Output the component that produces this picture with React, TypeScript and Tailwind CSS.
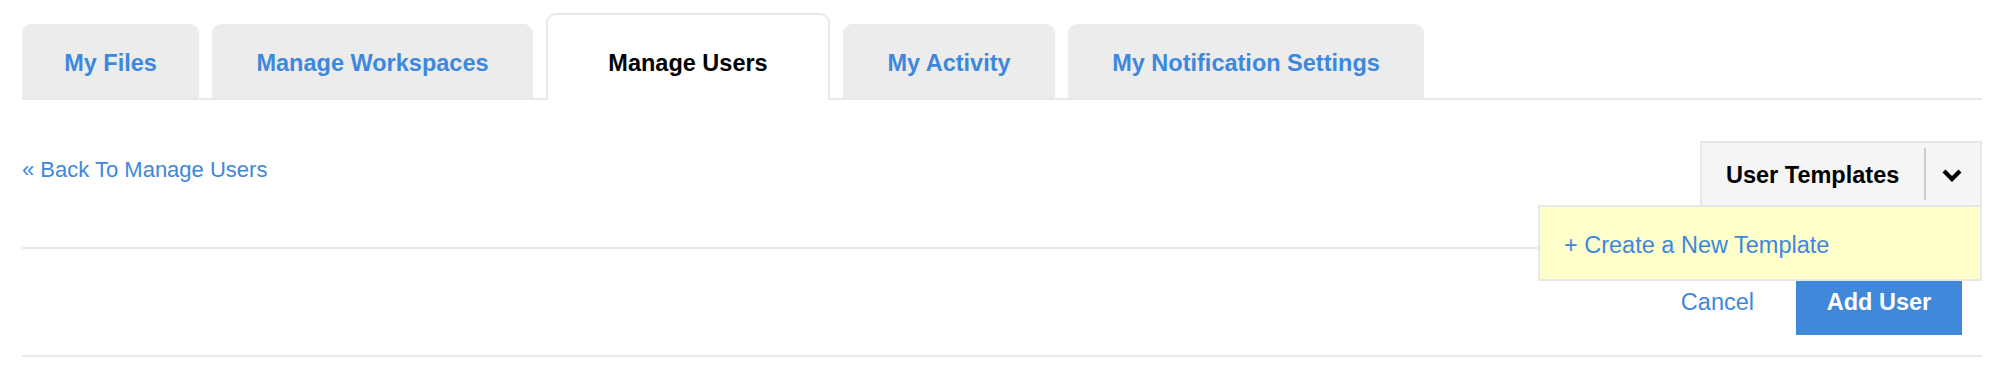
import React from "react";

const tabs = [
  { label: "My Files", w: "w-[177px]", active: false },
  { label: "Manage Workspaces", w: "w-[321px]", active: false },
  { label: "Manage Users", w: "w-[284px]", active: true },
  { label: "My Activity", w: "w-[212px]", active: false },
  { label: "My Notification Settings", w: "w-[356px]", active: false },
];

export default function App() {
  return (
    <div
      className="w-[2000px] h-[382px] bg-white pl-[22px] pr-[18px] text-[#3d88dc]"
      style={{ fontFamily: '"Liberation Sans", Arial, Helvetica, sans-serif' }}
    >
      {/* Tabs */}
      <div className="flex items-end gap-[13px] pt-[13px] border-b-2 border-[#e8e8e8]">
        {tabs.map((t) =>
          t.active ? (
            <div
              key={t.label}
              className={`${t.w} h-[87px] -mb-[2px] bg-white border-2 border-b-0 border-[#e8e8e8] rounded-t-[10px] flex justify-center pt-[37px] text-[23.5px] leading-none font-bold text-black`}
            >
              {t.label}
            </div>
          ) : (
            <div
              key={t.label}
              className={`${t.w} h-[74px] bg-[#ececec] rounded-t-[9px] flex justify-center pt-[28px] text-[23.5px] leading-none font-bold text-[#3d88dc]`}
            >
              {t.label}
            </div>
          )
        )}
      </div>

      {/* Header row */}
      <div className="flex justify-between items-start pt-[41px] pb-[40px] border-b-2 border-[#e8e8e8]">
        <a className="mt-[18px] text-[22px] leading-none text-[#3d88dc] cursor-pointer">
          « Back To Manage Users
        </a>
        <div className="relative">
          <div className="h-[66px] w-[282px] bg-[#f5f5f5] border-2 border-[#e8e8e8] flex items-center">
            <span className="pl-[24px] pr-[25px] pt-[3px] text-[23.5px] leading-none font-bold text-black whitespace-nowrap">
              User Templates
            </span>
            <span className="w-[2px] h-[52px] bg-[#cccccc]" />
            <span className="w-[51px] flex justify-center pt-[1px]">
              <svg width="22" height="14" viewBox="0 0 22 14">
                <polyline
                  points="3,3 11,11 19,3"
                  fill="none"
                  stroke="#000"
                  strokeWidth="4.2"
                />
              </svg>
            </span>
          </div>
          <div className="absolute top-[64px] right-0 z-10 w-[444px] h-[76px] bg-[#ffffcc] border-2 border-[#e8e8e8] flex items-center pl-[24px] pt-[6px]">
            <span className="text-[23.5px] leading-none text-[#3d88dc] whitespace-nowrap">
              + Create a New Template
            </span>
          </div>
        </div>
      </div>

      {/* Actions row */}
      <div className="flex justify-end items-center pt-[22px] pb-[20px] pr-[20px] border-b-2 border-[#e8e8e8]">
        <span className="text-[23.5px] leading-none text-[#3d88dc] mr-[42px]">Cancel</span>
        <button className="w-[166px] h-[64px] bg-[#3f88da] text-white text-[23.5px] leading-none font-bold">
          Add User
        </button>
      </div>
    </div>
  );
}
